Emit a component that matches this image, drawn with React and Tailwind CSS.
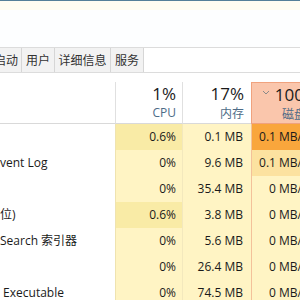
import React from "react";

const rows = [
  { name: "", cpu: "0.6%", mem: "0.1 MB", disk: "0.1 MB/秒", cpuBg: "bg-[#f9eba6]", diskBg: "bg-[#f9a63c]" },
  { name: "vent Log", cpu: "0%", mem: "9.6 MB", disk: "0.1 MB/秒", cpuBg: "bg-[#fff4c4]", diskBg: "bg-[#fce2a0]" },
  { name: "", cpu: "0%", mem: "35.4 MB", disk: "0 MB/秒", cpuBg: "bg-[#fff4c4]", diskBg: "bg-[#fff4c4]" },
  { name: "位)", cpu: "0.6%", mem: "3.8 MB", disk: "0 MB/秒", cpuBg: "bg-[#f9eba6]", diskBg: "bg-[#fff4c4]" },
  { name: "Search 索引器", cpu: "0%", mem: "5.6 MB", disk: "0 MB/秒", cpuBg: "bg-[#fff4c4]", diskBg: "bg-[#fff4c4]" },
  { name: "", cpu: "0%", mem: "26.4 MB", disk: "0 MB/秒", cpuBg: "bg-[#fff4c4]", diskBg: "bg-[#fff4c4]" },
  { name: " Executable", cpu: "0%", mem: "74.5 MB", disk: "0 MB/秒", cpuBg: "bg-[#fff4c4]", diskBg: "bg-[#fff4c4]" },
];

export default function App() {
  return (
    <div className="w-[300px] h-[300px] overflow-hidden bg-white text-[12px] text-[#1a1a1a] font-['Open_Sans','Noto_Sans_CJK_SC',sans-serif]">
      <div className="h-px bg-[#55809a]" />
      <div className="h-[9px] bg-[#fffdf2]" />
      <div className="h-[37px] bg-[#fdfeff]" />
      {/* tabs */}
      <div className="h-[26px] flex border-y border-[#dcdcdc] bg-white">
        <div className="w-[22px] flex justify-end items-center overflow-hidden whitespace-nowrap bg-[#f2f2f2] border-r border-[#d6d6d6] pr-[3px] text-[#333] font-['Noto_Sans_CJK_SC',sans-serif]">
          启动
        </div>
        <div className="w-[33px] flex justify-center items-center bg-[#f2f2f2] border-r border-[#d6d6d6] text-[#333] font-['Noto_Sans_CJK_SC',sans-serif]">
          用户
        </div>
        <div className="w-[56px] flex justify-center items-center bg-[#f2f2f2] border-r border-[#d6d6d6] text-[#333] font-['Noto_Sans_CJK_SC',sans-serif]">
          详细信息
        </div>
        <div className="w-[33px] flex justify-center items-center bg-[#f2f2f2] border-r border-[#d6d6d6] text-[#333] font-['Noto_Sans_CJK_SC',sans-serif]">
          服务
        </div>
        <div className="flex-1" />
      </div>
      <div className="h-[9px]" />
      {/* header */}
      <div className="h-[42px] flex whitespace-nowrap">
        <div className="w-[115px] shrink-0 border-b border-[#d9d9d9]" />
        <div className="w-[67px] shrink-0 border-l border-b border-[#e0e0e0] border-b-[#d9d9d9] flex flex-col items-end pr-[6px] pt-[1px]">
          <span className="text-[17px] leading-[22px] text-[#1a1a1a]">1%</span>
          <span className="text-[12px] leading-[16px] text-[#4d6b87]">CPU</span>
        </div>
        <div className="w-[69px] shrink-0 border-l border-b border-[#e0e0e0] border-b-[#d9d9d9] flex flex-col items-end pr-[7px] pt-[1px]">
          <span className="text-[17px] leading-[22px] text-[#1a1a1a]">17%</span>
          <span className="text-[12px] leading-[16px] text-[#4d6b87] font-['Noto_Sans_CJK_SC',sans-serif]">内存</span>
        </div>
        <div className="w-[72px] shrink-0 bg-[#fac6ac] border border-[#f0a27e] flex flex-col items-end pr-[4px] pt-[1px]">
          <span className="text-[17px] leading-[22px] text-[#1a1a1a] flex items-center">
            <svg width="8" height="5" viewBox="0 0 8 5" className="mr-[5px] mb-[6px]">
              <path d="M1 1 L4 4 L7 1" fill="none" stroke="#8a8a8a" strokeWidth="1" />
            </svg>
            100%
          </span>
          <span className="text-[12px] leading-[16px] text-[#4d6b87] font-['Noto_Sans_CJK_SC',sans-serif] pr-[12px]">磁盘</span>
        </div>
      </div>
      {/* rows */}
      {rows.map((r, i) => (
        <div key={i} className="h-[26px] flex whitespace-nowrap leading-[26px]">
          <div className="w-[115px] shrink-0 overflow-hidden whitespace-pre text-[#1a1a1a]">{r.name}</div>
          <div className={`w-[67px] shrink-0 text-right pr-[6px] border-l border-[#efe3b0] ${r.cpuBg}`}>{r.cpu}</div>
          <div className="w-[69px] shrink-0 text-right pr-[8px] border-l border-[#f3e8bd] bg-[#fff4c4]">{r.mem}</div>
          <div className={`w-[72px] shrink-0 text-right pr-[9px] border-l border-[#f3c19a] ${r.diskBg}`}>{r.disk}</div>
        </div>
      ))}
    </div>
  );
}
